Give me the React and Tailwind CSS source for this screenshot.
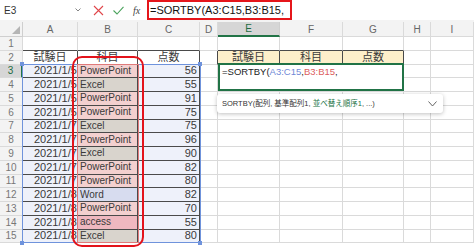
import React from 'react';

const rows = [
  { d: '2021/1/5', s: 'PowerPoint', n: 56 },
  { d: '2021/1/5', s: 'Excel', n: 55 },
  { d: '2021/1/5', s: 'PowerPoint', n: 91 },
  { d: '2021/1/5', s: 'PowerPoint', n: 75 },
  { d: '2021/1/7', s: 'Excel', n: 75 },
  { d: '2021/1/7', s: 'PowerPoint', n: 96 },
  { d: '2021/1/7', s: 'Excel', n: 90 },
  { d: '2021/1/7', s: 'PowerPoint', n: 82 },
  { d: '2021/1/7', s: 'PowerPoint', n: 80 },
  { d: '2021/1/8', s: 'Word', n: 82 },
  { d: '2021/1/8', s: 'PowerPoint', n: 70 },
  { d: '2021/1/8', s: 'access', n: 55 },
  { d: '2021/1/8', s: 'Excel', n: 80 },
];

const subjectBg = {
  PowerPoint: 'bg-[#f3d0cf]',
  Excel: 'bg-[#d9d4cd]',
  Word: 'bg-[#d7dcef]',
  access: 'bg-[#efb8c0]',
};

const colLetters = ['A', 'B', 'C', 'D', 'E', 'F', 'G', 'H', 'I'];
const font = { fontFamily: '"Liberation Sans", "Noto Sans CJK JP", sans-serif' };

// plain grid cell
const base = 'border-r border-b border-[#dadada] overflow-hidden whitespace-nowrap leading-none flex items-center';

function Cell({ r, c }) {
  // r: 1..15, c: 0..8 (A..I)
  let cls = base + ' bg-white';
  let content = null;
  const inTable = c <= 2;
  const inOut = c >= 4 && c <= 6;

  if (r === 1 && (inTable || inOut)) cls += ' border-b-[#4a4a4a]';

  if (r === 2) {
    if (inTable) {
      cls = base + ' bg-white border-b-[#4a4a4a] border-r-[#4a4a4a] justify-center text-[#3a3a3a]';
      content = ['試験日', '科目', '点数'][c];
    }
    if (c === 3) cls += ' border-r-[#4a4a4a]';
    if (inOut) {
      cls = base + ' bg-[#fdefca] border-b-[#4a4a4a] border-r-[#4a4a4a] justify-center text-[#3a3a3a]';
      content = ['試験日', '科目', '点数'][c - 4];
    }
  }

  if (r >= 3 && inTable) {
    const row = rows[r - 3];
    if (c === 0) {
      cls = base + ' bg-[#eef1fa] border-b-[#4a4a4a] text-[#3a3a3a] pl-[11px]';
      content = row.d;
    } else if (c === 1) {
      cls = base + ' ' + subjectBg[row.s] + ' border-b-[#4a4a4a] border-r-[#4a4a4a] text-[#3a3a3a] pl-[2px] text-[10px]';
      content = row.s;
    } else {
      cls = base + ' bg-[#eef1fa] border-b-[#4a4a4a] border-r-[#4a4a4a] text-[#3a3a3a] justify-end pr-[2px]';
      content = row.n;
    }
  }

  return <div className={cls}>{content}</div>;
}

export default function App() {
  return (
    <div className="relative w-[474px] h-[249px] overflow-hidden bg-white text-[11px]" style={font}>
      {/* formula bar */}
      <div className="flex h-[22px] bg-[#f3f3f3] pb-[2px]">
        <div className="flex w-[86px] items-center justify-between bg-white pl-[4px] pr-[5px] text-[10px] text-[#333]">
          <span>E3</span>
          <svg width="6" height="4" viewBox="0 0 6 4">
            <path d="M0.5 0.5 L3 3 L5.5 0.5" fill="none" stroke="#777" strokeWidth="0.9" />
          </svg>
        </div>
        <div className="flex w-[61px] items-center gap-[9px] bg-white pl-[7px]">
          <svg width="11" height="11" viewBox="0 0 11 11">
            <path d="M1 1 L10 10 M10 1 L1 10" stroke="#e0464a" strokeWidth="1.1" />
          </svg>
          <svg width="11" height="9" viewBox="0 0 11 9">
            <path d="M0.5 4.5 L4 8 L10.5 0.8" fill="none" stroke="#4aa35c" strokeWidth="1.1" />
          </svg>
          <span className="text-[10px] italic text-[#444]" style={{ fontFamily: '"Liberation Serif", serif' }}>fx</span>
        </div>
        <div className="flex w-[145px] items-center border-2 border-[#e5161b] bg-white pl-[1px] text-[11px] text-[#111]">
          =SORTBY(A3:C15,B3:B15,
        </div>
        <div className="flex-1 bg-white" />
      </div>

      {/* sheet grid */}
      <div className="grid grid-cols-[23px_55px_60px_62px_18px_62px_63px_61px_27px_1fr] grid-rows-[15px_repeat(15,13.75px)] text-[11px]">
        <div className="relative border-r border-b border-[#cfcfcf] bg-[#f3f3f3]">
          <svg className="absolute bottom-[2px] right-[2px]" width="8" height="8" viewBox="0 0 8 8">
            <path d="M8 0 L8 8 L0 8 Z" fill="#b5b5b5" />
          </svg>
        </div>
        {colLetters.map((l) =>
          l === 'E' ? (
            <div key={l} className="flex items-center justify-center border-r border-b-2 border-r-[#cfcfcf] border-b-[#217346] bg-[#d6d6d6] text-[10px] text-[#1e6b41]">
              {l}
            </div>
          ) : (
            <div key={l} className="flex items-center justify-center border-r border-b border-[#dadada] bg-[#f3f3f3] text-[10px] text-[#666]">
              {l}
            </div>
          )
        )}
        {Array.from({ length: 15 }, (_, i) => i + 1).map((r) => (
          <React.Fragment key={r}>
            {r === 3 ? (
              <div className="flex items-center justify-center border-r-2 border-b border-r-[#217346] border-b-[#dadada] bg-[#d6d6d6] text-[10px] text-[#1e6b41]">
                {r}
              </div>
            ) : (
              <div className="flex items-center justify-center border-r border-b border-[#dadada] bg-[#f3f3f3] text-[10px] text-[#777]">
                {r}
              </div>
            )}
            {colLetters.map((l, c) => (
              <Cell key={l} r={r} c={c} />
            ))}
          </React.Fragment>
        ))}
      </div>

      {/* reference highlights */}
      <div className="pointer-events-none absolute left-[22px] top-[64px] h-[179px] w-[179px] border-[1.5px] border-[#6f93dc]" />
      <div className="absolute left-[20px] top-[62px] h-[4px] w-[4px] bg-[#6f93dc]" />
      <div className="absolute left-[198px] top-[62px] h-[4px] w-[4px] bg-[#6f93dc]" />
      <div className="absolute left-[20px] top-[241px] h-[4px] w-[4px] bg-[#6f93dc]" />
      <div className="absolute left-[198px] top-[241px] h-[4px] w-[4px] bg-[#6f93dc]" />
      <div className="pointer-events-none absolute left-[77px] top-[64px] h-[179px] w-[62px] border border-[#e07a7a]" />

      {/* red callout */}
      <div className="pointer-events-none absolute left-[72px] top-[56px] h-[191px] w-[72px] rounded-[10px] border-[2.5px] border-[#e3131b]" />

      {/* editing cell */}
      <div className="absolute left-[218px] top-[63px] h-[28px] w-[186px] border-2 border-[#217346] bg-white pl-[2px] pt-[1px] text-[9.5px] leading-[12px] text-[#222]">
        =SORTBY(<span className="text-[#6f88d6]">A3:C15</span>,<span className="text-[#dc5d5d]">B3:B15</span>,
      </div>

      {/* function tooltip */}
      <div className="absolute left-[217px] top-[94px] flex h-[19px] w-[226px] items-center justify-between rounded-[3px] bg-white pl-[5px] pr-[6px] text-[7.5px] text-[#333] shadow-[0_1px_4px_rgba(0,0,0,0.25)]">
        <span>
          SORTBY(配列, 基準配列1, <span className="text-[#217346]">並べ替え順序1</span>, ...)
        </span>
        <svg width="9" height="6" viewBox="0 0 9 6">
          <path d="M0.5 0.5 L4.5 5 L8.5 0.5" fill="none" stroke="#555" strokeWidth="0.9" />
        </svg>
      </div>
    </div>
  );
}
